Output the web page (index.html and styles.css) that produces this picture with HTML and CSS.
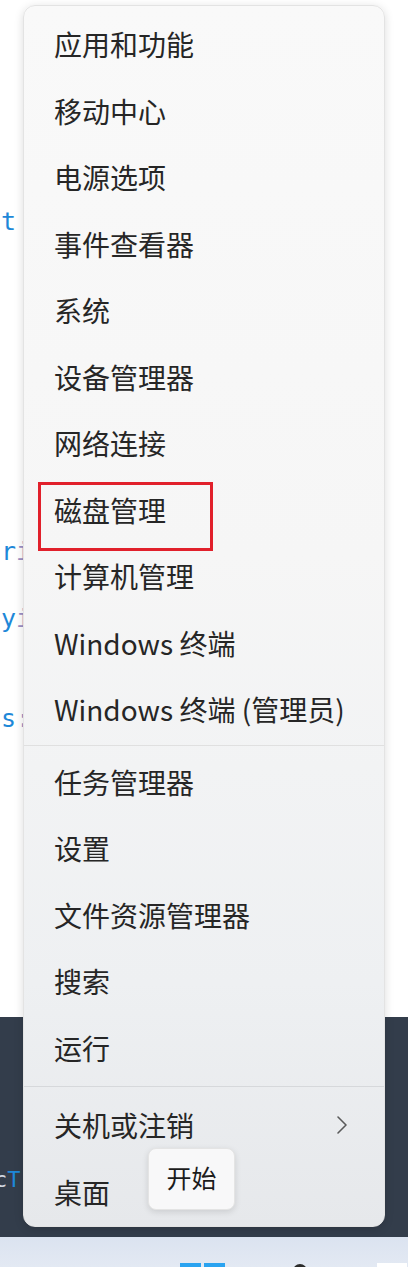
FILE: index.html
```html
<!DOCTYPE html>
<html lang="zh-CN">
<head>
<meta charset="utf-8">
<title>Win+X 菜单</title>
<link rel="stylesheet" href="styles.css">
</head>
<body>
<div class="desktop">
  <div class="editor">
    <div class="code c1"><span class="kw">t</span></div>
    <div class="code c2"><span class="kw">r</span><span class="pu">i</span></div>
    <div class="code c3"><span class="kw">y</span><span class="pu">i</span></div>
    <div class="code c4"><span class="kw">s</span><span class="pu">:</span></div>
  </div>
  <div class="dark">
    <div class="code c5"><span class="wh">c</span><span class="kw">T</span></div>
  </div>
  <div class="taskbar">
    <span class="tb-start"></span>
    <span class="tb-search"></span>
    <span class="tb-app"></span>
  </div>
</div>

<div class="menu">
  <div class="item">应用和功能</div>
  <div class="item">移动中心</div>
  <div class="item">电源选项</div>
  <div class="item">事件查看器</div>
  <div class="item">系统</div>
  <div class="item">设备管理器</div>
  <div class="item">网络连接</div>
  <div class="item marked">磁盘管理</div>
  <div class="item">计算机管理</div>
  <div class="item">Windows 终端</div>
  <div class="item">Windows 终端 (管理员)</div>
  <div class="sep"></div>
  <div class="item">任务管理器</div>
  <div class="item">设置</div>
  <div class="item">文件资源管理器</div>
  <div class="item">搜索</div>
  <div class="item">运行</div>
  <div class="sep sep2"></div>
  <div class="item sub">关机或注销
    <svg class="chev" width="12" height="20" viewBox="0 0 12 20"><path d="M2 2 L10 10 L2 18" fill="none" stroke="#5a5a5a" stroke-width="1.6" stroke-linecap="round" stroke-linejoin="round"/></svg>
  </div>
  <div class="item">桌面</div>
</div>

<div class="tooltip">开始</div>
</body>
</html>
```

FILE: styles.css
```css
* { box-sizing: border-box; }

html, body {
  margin: 0;
  padding: 0;
}

body {
  width: 408px;
  height: 1267px;
  position: relative;
  overflow: hidden;
  font-family: "Noto Sans CJK SC", "Noto Sans", sans-serif;
  background: #ffffff;
}

.desktop {
  display: flex;
  flex-direction: column;
  height: 1267px;
}

.editor {
  height: 1017px;
  background: #ffffff;
  display: flex;
  flex-direction: column;
}

.dark {
  height: 220px;
  background: #333d4b;
  display: flex;
  flex-direction: column;
}

.taskbar {
  height: 30px;
  background: linear-gradient(#dbe3f0, #e3e9f3);
  position: relative;
  display: flex;
  align-items: flex-start;
}

.code {
  font-family: "DejaVu Sans Mono", "Liberation Mono", monospace;
  font-size: 25px;
  line-height: 30px;
  height: 30px;
  padding-left: 1px;
  white-space: pre;
}

.c1 { margin-top: 207px; }
.c2 { margin-top: 300px; }
.c3 { margin-top: 37px; }
.c4 { margin-top: 70px; }
.c5 { margin-top: 148px; font-size: 22px; margin-left: -7px; }

.kw { color: #1e88d8; }
.pu { color: #9b8fc4; }
.wh { color: #cfd6e0; }

.tb-start {
  margin-left: 180px;
  margin-top: 26px;
  width: 45px;
  height: 10px;
  background: linear-gradient(90deg, #2aa3f0 0 21px, transparent 21px 24px, #2aa3f0 24px);
}

.tb-search {
  margin-left: 68px;
  margin-top: 27px;
  width: 14px;
  height: 14px;
  border-radius: 50%;
  background: #2b2b2b;
}

.tb-app {
  margin-left: 70px;
  margin-top: 26px;
  width: 30px;
  height: 10px;
  background: #ffffff;
}

.menu {
  position: absolute;
  left: 23px;
  top: 5px;
  width: 362px;
  height: 1222px;
  border-radius: 12px;
  background: linear-gradient(180deg, #f9f9f9 0%, #f6f6f6 45%, #eef0f2 80%, #e6e8eb 100%);
  border: 1px solid #e3e3e3;
  box-shadow: 0 2px 10px rgba(0, 0, 0, 0.14);
  padding: 5px 0 0 0;
  display: flex;
  flex-direction: column;
}

.item {
  height: 66.5px;
  line-height: 66.5px;
  padding-left: 30px;
  font-size: 28px;
  color: #262626;
  white-space: nowrap;
  position: relative;
  display: flex;
  align-items: center;
}

.item.marked::after {
  content: "";
  position: absolute;
  left: 14px;
  top: 5px;
  width: 169px;
  height: 63px;
  border: 3px solid #e1202b;
}

.item.sub {
  justify-content: space-between;
  padding-right: 36px;
}

.chev {
  display: block;
}

.sep {
  height: 1px;
  margin: 2px 0 3px;
  background: #e0e0e0;
}

.sep2 {
  margin: 5px 0 5px;
  background: #d6d8db;
}

.tooltip {
  position: absolute;
  left: 148px;
  top: 1148px;
  width: 87px;
  height: 62px;
  border-radius: 8px;
  background: #f8f8f9;
  border: 1px solid #e4e4e4;
  box-shadow: 0 2px 6px rgba(0, 0, 0, 0.12);
  font-size: 25px;
  color: #1c1c1c;
  display: flex;
  align-items: center;
  justify-content: center;
  padding-bottom: 4px;
}
```
